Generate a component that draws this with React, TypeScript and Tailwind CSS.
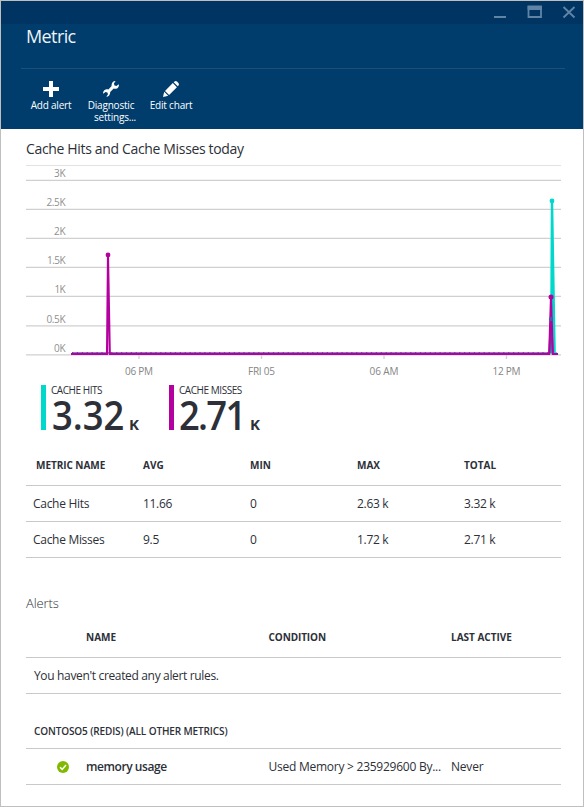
import React from "react";

const gridLines = [
  { y: 15, label: "3K", w: 11.5 },
  { y: 44, label: "2.5K", w: 19 },
  { y: 73, label: "2K", w: 11.5 },
  { y: 102, label: "1.5K", w: 18.5 },
  { y: 131, label: "1K", w: 11 },
  { y: 160.5, label: "0.5K", w: 19 },
  { y: 189.5, label: "0K", w: 11.5 },
];

const ticks = [
  { x: 113, label: "06 PM", w: 28 },
  { x: 235.5, label: "FRI 05", w: 27 },
  { x: 358, label: "06 AM", w: 29 },
  { x: 480.5, label: "12 PM", w: 28 },
];

const metrics = [
  ["Cache Hits", "11.66", "0", "2.63 k", "3.32 k"],
  ["Cache Misses", "9.5", "0", "1.72 k", "2.71 k"],
];

function WindowControls() {
  return (
    <svg width="82" height="14" viewBox="0 0 82 14" fill="none" stroke="#5f84a6">
      <path d="M0 12h12" strokeWidth="2" />
      <path d="M34.5 4.5V1.5H47v10.5H34.5V4" strokeWidth="1.8" />
      <path d="M33.6 3h14.3" strokeWidth="4" />
      <path d="M69.5 2l11 10.5M80.5 2l-11 10.5" strokeWidth="1.9" />
    </svg>
  );
}

function PlusIcon() {
  return (
    <svg width="16" height="16" viewBox="0 0 16 16" fill="#fff">
      <path d="M6 0h4v6h6v4h-6v6H6v-6H0V6h6z" />
    </svg>
  );
}

function WrenchIcon() {
  return (
    <svg width="16" height="16" viewBox="0 0 16 16" fill="#fff">
      <path d="M12.6 0.1L10.9 2.6L11.5 4.5L13.4 5.1L15.8 3.3C16.3 5.2 15 7.4 12.9 7.7C11.9 7.8 11.1 7.6 10.7 7.5L7.2 11C7.3 13.6 5.7 15.7 3.3 15.8L5 13.3L4.4 11.5L2.5 10.9L0.1 12.7C-0.2 10.3 1.4 8.4 3.4 8.2C4.3 8.1 4.9 8.3 5.4 8.5L8.6 5.1C8.2 2.5 9.9 0 12.6 0.1Z" />
    </svg>
  );
}

function PencilIcon() {
  return (
    <svg width="16" height="16" viewBox="0 0 16 16" fill="#fff">
      <path d="M1.2 10.8L0 16l5.2-1.2zM2 9.9L9.8 2.1L13.9 6.2L6.1 14zM10.7 1.2L11.6 0.4Q12.8-0.4 14 0.6L15.4 2Q16.4 3.2 15.5 4.5L14.8 5.3z" />
    </svg>
  );
}

function Chart() {
  return (
    <svg width="535" height="216" viewBox="0 0 535 216" className="block">
      <rect x="0" y="0" width="535" height="1" fill="#e2e2e2" />
      {gridLines.map((g) => (
        <React.Fragment key={g.label}>
          <path d={`M0 ${g.y + 0.3}H535`} stroke="#d0d0d0" strokeWidth="1.3" />
          <text x="39.5" y={g.y - 3} textAnchor="end" textLength={g.w} fontSize="10" fill="#8f8f8f">
            {g.label}
          </text>
        </React.Fragment>
      ))}
      {ticks.map((t) => (
        <React.Fragment key={t.label}>
          <path d={`M${t.x} 190v4`} stroke="#d0d0d0" strokeWidth="1.3" />
          <text x={t.x} y="210" textAnchor="middle" textLength={t.w} fontSize="10" fill="#858585">
            {t.label}
          </text>
        </React.Fragment>
      ))}
      <path d="M525.2 188.5L526 36L528.6 188.5H531" fill="none" stroke="#00d8cc" strokeWidth="2.4" />
      <path d="M523.4 188.5L525 154L526.8 188.5" fill="none" stroke="#5f4fa8" strokeWidth="2.2" />
      <path d="M46 187.9H523" stroke="#8f86c6" strokeWidth="1.6" />
      <path d="M46 187.9H523" stroke="#5c4fa6" strokeWidth="1.6" strokeDasharray="1.2 3.7" />
      <path d="M45 189H81L82 90L83.8 189H523.2L525 132L526.8 189H532" fill="none" stroke="#b4009e" strokeWidth="2.1" />
      <circle cx="526" cy="36" r="2.4" fill="#00d8cc" />
      <circle cx="525" cy="154" r="2.2" fill="#5f4fa8" />
      <circle cx="82" cy="90" r="2.4" fill="#b4009e" />
      <circle cx="525" cy="132" r="2.5" fill="#b4009e" />
    </svg>
  );
}

export default function App() {
  return (
    <div className="flex h-[807px] w-[584px] flex-col border border-[#bfbfbf] bg-white font-['Open_Sans','Noto_Sans',sans-serif] text-[#2d3038]">
      <header className="h-[128px] shrink-0 bg-[#003d6c] text-white">
        <div className="flex h-[23px] items-start justify-end bg-[#003462] pt-1 pr-[7px]">
          <WindowControls />
        </div>
        <div className="mr-[18px] ml-5 h-[45px] border-b border-[#1d5078] pl-[5px]">
          <h1 className="text-lg leading-[25px] tracking-[-0.6px] text-[#edf3f8]">Metric</h1>
        </div>
        <div className="flex pt-[12px] pl-5 text-[10px] leading-3">
          <div className="flex w-[60px] flex-col items-center">
            <PlusIcon />
            <span className="mt-0.5 tracking-[-0.2px]">Add alert</span>
          </div>
          <div className="flex w-[60px] flex-col items-center">
            <WrenchIcon />
            <span className="mt-0.5 tracking-[-0.2px]">Diagnostic</span>
            <span className="pl-2 tracking-[-0.2px]">settings...</span>
          </div>
          <div className="flex w-[60px] flex-col items-center">
            <PencilIcon />
            <span className="mt-0.5 tracking-[-0.2px]">Edit chart</span>
          </div>
        </div>
      </header>

      <main className="pr-[22px] pl-[25px]">
        <h2 className="h-9 pt-2.5 text-sm leading-5 tracking-[-0.34px]">Cache Hits and Cache Misses today</h2>
        <Chart />
        <div className="flex h-[49px] pt-1 pl-[15px]">
          <div className="h-[45px] w-32 border-l-[5px] border-[#00d8cc] pl-[5px]">
            <div className="-mt-px text-[10px] leading-[12px] tracking-[-0.45px]">CACHE HITS</div>
            <div className="flex items-baseline pl-px font-semibold leading-[38px]">
              <span className="w-[77px] origin-left scale-x-[0.91] text-[40px]">3.32</span>
              <span className="text-[15px] font-bold">K</span>
            </div>
          </div>
          <div className="h-[45px] w-32 border-l-[5px] border-[#b4009e] pl-[5px]">
            <div className="-mt-px text-[10px] leading-[12px] tracking-[-0.45px]">CACHE MISSES</div>
            <div className="flex items-baseline font-semibold leading-[38px]">
              <span className="w-[71px] origin-left scale-x-[0.91] text-[40px] tracking-[-1.9px]">2.71</span>
              <span className="text-[15px] font-bold">K</span>
            </div>
          </div>
        </div>

        <section className="text-xs">
          <div className="grid h-14 grid-cols-[117px_107px_107px_107px_1fr] border-b border-[#c9c9c9] pt-[27px] text-[10px] font-bold leading-4">
            <span className="pl-2.5 tracking-[-0.05px]">METRIC NAME</span>
            <span>AVG</span>
            <span>MIN</span>
            <span>MAX</span>
            <span>TOTAL</span>
          </div>
          {metrics.map((row) => (
            <div key={row[0]} className="grid h-9 grid-cols-[110px_107px_107px_107px_1fr] items-center border-b border-[#c9c9c9] pt-px pl-[7px] tracking-[-0.3px]">
              {row.map((v, i) => (
                <span key={i}>{v}</span>
              ))}
            </div>
          ))}
        </section>

        <section className="text-xs">
          <h3 className="h-[66px] pt-[35px] text-[13px] font-light leading-5 tracking-[-0.1px]">Alerts</h3>
          <div className="grid h-[34px] grid-cols-[182.5px_182.5px_1fr] border-b border-[#c9c9c9] pt-[5px] pl-[60px] text-[10px] font-bold leading-4">
            <span>NAME</span>
            <span className="tracking-[-0.1px]">CONDITION</span>
            <span>LAST ACTIVE</span>
          </div>
          <div className="flex h-9 items-center border-b border-[#c9c9c9] pt-px pl-2 tracking-[-0.34px]">You haven't created any alert rules.</div>
          <div className="h-[55px] border-b border-[#c9c9c9] pt-[29px] pl-2 text-[10px] font-semibold leading-4 tracking-[-0.12px]">
            CONTOSO5 (REDIS) (ALL OTHER METRICS)
          </div>
          <div className="grid h-9 grid-cols-[29px_182.5px_182.5px_1fr] items-center border-b border-[#c9c9c9] pt-px pl-[31px]">
            <svg width="12" height="12" viewBox="0 0 12 12">
              <circle cx="6" cy="6" r="6" fill="#7fba00" />
              <path d="M3 6.2l2.2 2.2L9 4" fill="none" stroke="#fff" strokeWidth="1.5" />
            </svg>
            <span className="font-semibold tracking-[-0.43px]">memory usage</span>
            <span className="whitespace-nowrap tracking-[-0.25px]">Used Memory &gt; 235929600 By...</span>
            <span className="tracking-[-0.2px]">Never</span>
          </div>
        </section>
      </main>
    </div>
  );
}
